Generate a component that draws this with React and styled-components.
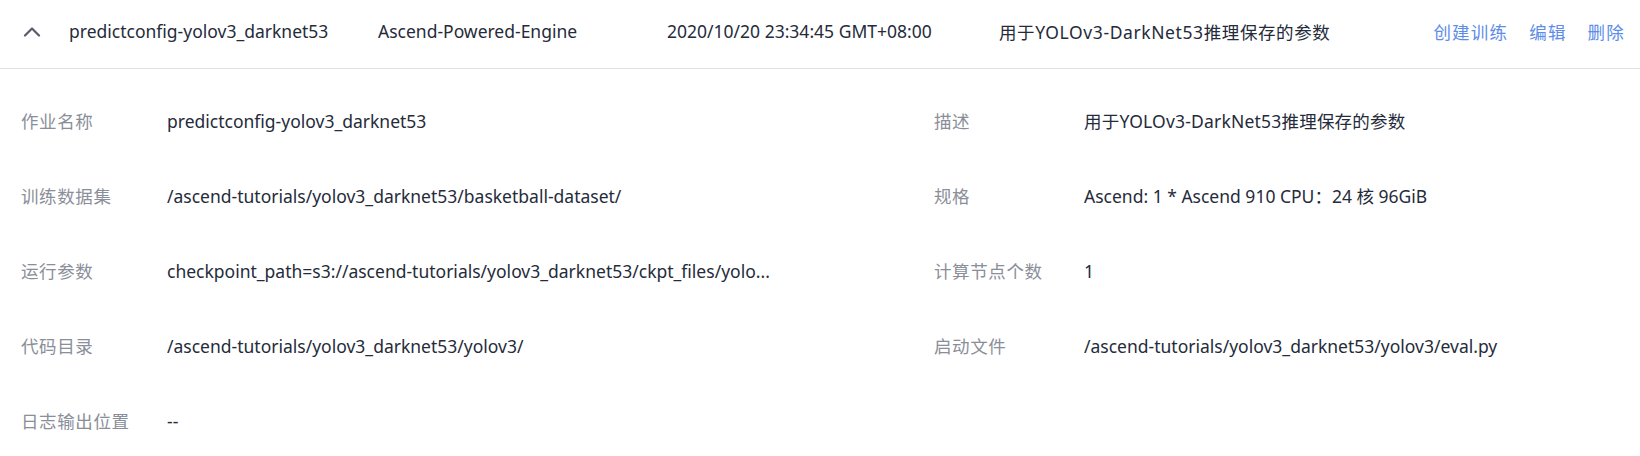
import React from 'react'
import styled, { createGlobalStyle } from 'styled-components'

const GlobalStyle = createGlobalStyle`
  html, body {
    margin: 0;
    padding: 0;
    background: #ffffff;
  }
  body {
    font-family: "Noto Sans", "Noto Sans CJK SC", sans-serif;
    font-size: 17.5px;
    color: #252b3a;
  }
`

const Panel = styled.div`
  width: 1640px;
  background: #fff;
`

const Header = styled.div`
  display: grid;
  grid-template-columns: 49px 309px 289px 332px 1fr auto;
  align-items: center;
  height: 62px;
  padding: 0 15px 6px 20px;
  border-bottom: 1px solid #dfe1e6;
`

const Toggle = styled.button`
  display: flex;
  align-items: center;
  padding: 0 0 0 3px;
  margin: 0;
  border: 0;
  background: none;
  cursor: pointer;
  color: #575d6c;
`

const Cell = styled.div`
  white-space: nowrap;
  color: #252b3a;
  letter-spacing: ${p => (p.$cjk ? '0.6px' : '0')};
`

const Actions = styled.div`
  display: flex;
  gap: 21px;
`

const ActionLink = styled.a`
  color: #5e8de8;
  text-decoration: none;
  cursor: pointer;
  letter-spacing: 1.2px;
`

const Details = styled.div`
  display: grid;
  grid-template-columns: 913px 1fr;
  padding: 14px 0 0 21px;
`

const Field = styled.div`
  display: flex;
  align-items: center;
  height: 75px;
`

const Label = styled.div`
  width: ${p => p.$width}px;
  flex-shrink: 0;
  color: #8a8e99;
  letter-spacing: 0.6px;
`

const Value = styled.div`
  color: #252b3a;
  white-space: nowrap;
  letter-spacing: ${p => (p.$cjk ? '0.2px' : '0')};
`

const left = [
  ['作业名称', 'predictconfig-yolov3_darknet53'],
  ['训练数据集', '/ascend-tutorials/yolov3_darknet53/basketball-dataset/'],
  ['运行参数', 'checkpoint_path=s3://ascend-tutorials/yolov3_darknet53/ckpt_files/yolo...'],
  ['代码目录', '/ascend-tutorials/yolov3_darknet53/yolov3/'],
  ['日志输出位置', '--'],
]

const right = [
  ['描述', '用于YOLOv3-DarkNet53推理保存的参数', true],
  ['规格', 'Ascend: 1 * Ascend 910 CPU：24 核 96GiB'],
  ['计算节点个数', '1'],
  ['启动文件', '/ascend-tutorials/yolov3_darknet53/yolov3/eval.py'],
  null,
]

function Chevron() {
  return (
    <svg width="18" height="11" viewBox="0 0 18 11" fill="none">
      <path d="M2 9.5L9 2.5L16 9.5" stroke="currentColor" strokeWidth="2.2" strokeLinecap="round" strokeLinejoin="round" />
    </svg>
  )
}

export default function App() {
  return (
    <Panel>
      <GlobalStyle />
      <Header>
        <Toggle><Chevron /></Toggle>
        <Cell>predictconfig-yolov3_darknet53</Cell>
        <Cell>Ascend-Powered-Engine</Cell>
        <Cell>2020/10/20 23:34:45 GMT+08:00</Cell>
        <Cell $cjk>用于YOLOv3-DarkNet53推理保存的参数</Cell>
        <Actions>
          <ActionLink>创建训练</ActionLink>
          <ActionLink>编辑</ActionLink>
          <ActionLink>删除</ActionLink>
        </Actions>
      </Header>
      <Details>
        {left.map((row, i) => (
          <React.Fragment key={i}>
            <Field>
              <Label $width={146}>{row[0]}</Label>
              <Value>{row[1]}</Value>
            </Field>
            <Field>
              {right[i] && (
                <>
                  <Label $width={150}>{right[i][0]}</Label>
                  <Value $cjk={right[i][2]}>{right[i][1]}</Value>
                </>
              )}
            </Field>
          </React.Fragment>
        ))}
      </Details>
    </Panel>
  )
}
